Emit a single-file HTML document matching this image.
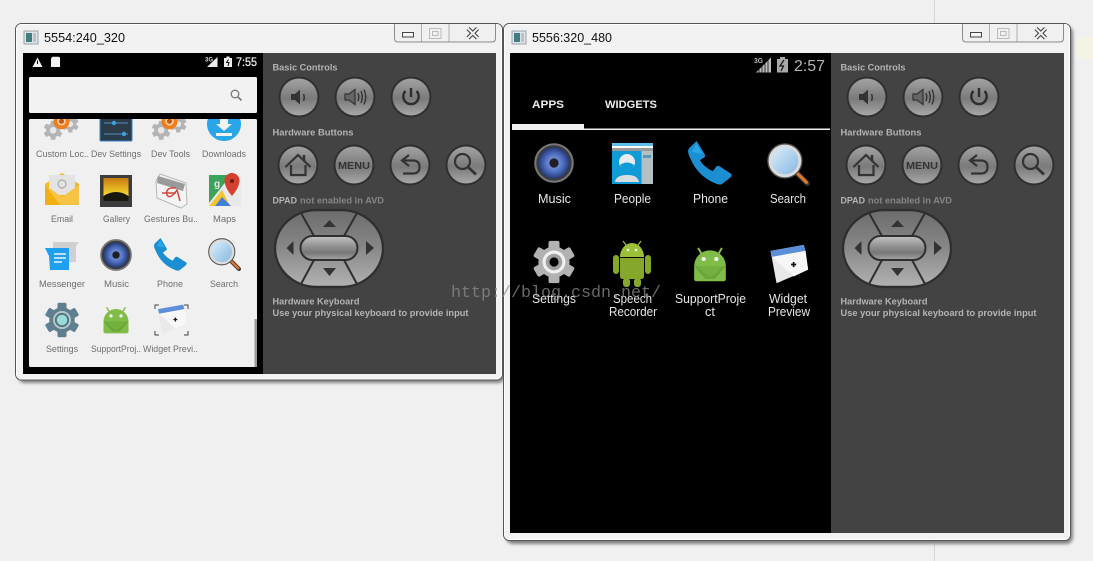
<!DOCTYPE html>
<html><head><meta charset="utf-8"><title>Emulators</title>
<style>html,body{margin:0;padding:0;background:#f0f0f0;width:1093px;height:561px;overflow:hidden}svg{display:block}text{font-family:"Liberation Sans",sans-serif}</style></head>
<body>
<svg width="1093" height="561" viewBox="0 0 1093 561" xmlns="http://www.w3.org/2000/svg">
<defs>
<filter id="sh" x="-5%" y="-5%" width="110%" height="110%"><feGaussianBlur stdDeviation="1.6"/></filter>
<linearGradient id="btn" x1="0" y1="0" x2="0" y2="1">
<stop offset="0" stop-color="#a2a2a2"/><stop offset=".2" stop-color="#949494"/><stop offset=".45" stop-color="#808080"/><stop offset=".55" stop-color="#7b7b7b"/><stop offset=".75" stop-color="#8e8e8e"/><stop offset="1" stop-color="#a8a8a8"/>
</linearGradient>
<linearGradient id="pill" x1="0" y1="0" x2="0" y2="1">
<stop offset="0" stop-color="#c4c4c4"/><stop offset=".5" stop-color="#8a8a8a"/><stop offset=".7" stop-color="#777"/><stop offset="1" stop-color="#a8a8a8"/>
</linearGradient>
<linearGradient id="dp" x1="0" y1="0" x2="0" y2="1">
<stop offset="0" stop-color="#6c6c6c"/><stop offset=".45" stop-color="#858585"/><stop offset="1" stop-color="#b2b2b2"/>
</linearGradient>
<radialGradient id="mus"><stop offset="0" stop-color="#8fa8e8"/><stop offset=".6" stop-color="#4c6cc0"/><stop offset="1" stop-color="#24386e"/></radialGradient>
<linearGradient id="lens" x1="0" y1="0" x2="1" y2="1"><stop offset="0" stop-color="#e2f1fb"/><stop offset="1" stop-color="#7fb4e0"/></linearGradient>
<linearGradient id="gold" x1="0" y1="0" x2="0" y2="1"><stop offset="0" stop-color="#c77a10"/><stop offset=".7" stop-color="#f5d22e"/><stop offset="1" stop-color="#f9e36a"/></linearGradient>

<symbol id="music" viewBox="0 0 48 48"><circle cx="24" cy="24" r="23" fill="#3c3c3c"/><circle cx="24" cy="24" r="22.500" fill="none" stroke="#777" stroke-width="2.500"/><circle cx="24" cy="24" r="19" fill="url(#mus)"/><circle cx="24" cy="24" r="8" fill="#6a84c8"/><circle cx="24" cy="24" r="5.500" fill="#1e1e26"/></symbol>
<symbol id="phone" viewBox="0 0 48 48"><path d="M9.500 0 L18.500 15 Q19 18 16 19 L13 21 Q17 28 27 33 L30 29 Q32 26 35 28 L47.500 36 Q48 38 46 40 L37 47 Q35 48 32 47 Q12 40 3 20 Q0 14 0 11 Q0 9 2 7Z" fill="#1b8fd2"/><path d="M9 3 L16 14 L4 12Z" fill="#2aa6e6"/></symbol>
<symbol id="search" viewBox="0 0 48 48"><line x1="30" y1="30" x2="45" y2="45" stroke="#333" stroke-width="6" stroke-linecap="round"/><line x1="33" y1="33" x2="44" y2="44" stroke="#e0782c" stroke-width="3.500" stroke-linecap="round"/><circle cx="20" cy="20" r="17" fill="url(#lens)" stroke="#dcdcdc" stroke-width="4"/><circle cx="20" cy="20" r="19" fill="none" stroke="#555" stroke-width="1.500"/></symbol>
<symbol id="android" viewBox="0 0 48 48"><path d="M13 12 L9 5 M35 12 L39 5" stroke="#8cc152" stroke-width="2.400"/><path d="M4 28 A20 20 0 0 1 44 28 V44 Q44 47 41 47 H7 Q4 47 4 44Z" fill="#7fbd48"/><path d="M4 28 H44 L30 44 H18Z" fill="#6aa53b"/><path d="M7 28 H41 L28 40 Q24 42 20 40Z" fill="#74b040"/><circle cx="16" cy="19" r="2.600" fill="#f2f2f2"/><circle cx="32" cy="19" r="2.600" fill="#f2f2f2"/></symbol>
<symbol id="widget" viewBox="0 0 48 48"><path d="M3 8 L42 1 L47 30 L10 46Z" fill="#e9e9e9"/><path d="M3 8 L42 1 L44 8 L5 15Z" fill="#5b8fd8"/><path d="M5 15 L44 8 L47 30 L30 38Z" fill="#f7f7f7"/><path d="M27 24h6M30 21v6" stroke="#111" stroke-width="2"/></symbol>
<symbol id="gearL" viewBox="0 0 48 48"><g fill="#5f7f8e"><circle cx="24" cy="24" r="17"/><rect x="18" y="1" width="12" height="46" rx="2"/><rect x="18" y="1" width="12" height="46" rx="2" transform="rotate(60 24 24)"/><rect x="18" y="1" width="12" height="46" rx="2" transform="rotate(120 24 24)"/></g><circle cx="24" cy="24" r="12" fill="#b7c7ce"/><circle cx="24" cy="24" r="9.500" fill="#55727f"/><circle cx="24" cy="24" r="7" fill="#98dcd8"/></symbol>
<symbol id="gearR" viewBox="0 0 48 48"><g fill="#b2b2b2"><circle cx="24" cy="24" r="17"/><rect x="18" y="1" width="12" height="46" rx="2"/><rect x="18" y="1" width="12" height="46" rx="2" transform="rotate(60 24 24)"/><rect x="18" y="1" width="12" height="46" rx="2" transform="rotate(120 24 24)"/></g><circle cx="24" cy="24" r="12.500" fill="#f0f0f0"/><circle cx="24" cy="24" r="9" fill="#a0a0a0"/><circle cx="24" cy="24" r="5" fill="#000"/></symbol>
<symbol id="gearG" viewBox="0 0 48 48"><g fill="#b4b4b4"><circle cx="24" cy="24" r="17"/><rect x="18" y="1" width="12" height="46" rx="2"/><rect x="18" y="1" width="12" height="46" rx="2" transform="rotate(60 24 24)"/><rect x="18" y="1" width="12" height="46" rx="2" transform="rotate(120 24 24)"/></g><circle cx="24" cy="24" r="8" fill="#e8e8e8"/></symbol>
<symbol id="gearO" viewBox="0 0 48 48"><use href="#gearG" x="-1" y="13" width="27" height="27"/><use href="#gearG" x="24" y="6" width="24" height="24"/><circle cx="24" cy="14" r="11" fill="#ef7d1a"/><circle cx="24" cy="14" r="6" fill="#f8c9a0"/><circle cx="24" cy="14" r="3.500" fill="#c65a10"/></symbol>

<g id="caption">
<path d="M394.500 24 V38 Q394.500 42 398 42 H492 Q495.500 42 495.500 38 V24" fill="#f0f0f0" stroke="#8b8b8b"/>
<path d="M421.500 24V41.500M449 24V41.500" stroke="#b0b0b0"/>
<rect x="402.500" y="32.500" width="11" height="4.500" fill="#f4f4f4" stroke="#444"/>
<rect x="429.500" y="28.500" width="11.500" height="10" fill="none" stroke="#bbb"/><rect x="432.500" y="31.500" width="5.500" height="4" fill="none" stroke="#bbb"/>
<path d="M468 28.500 L477.500 38 M477.500 28.500 L468 38" stroke="#444" stroke-width="4.200"/><path d="M468 28.500 L477.500 38 M477.500 28.500 L468 38" stroke="#f0f0f0" stroke-width="2"/>
</g>

<g id="panel">
<g font-weight="bold" font-size="9" fill="#b4b4b4">
<text x="272.500" y="70.500" textLength="65" lengthAdjust="spacingAndGlyphs">Basic Controls</text>
<text x="272.500" y="135.500" textLength="81" lengthAdjust="spacingAndGlyphs">Hardware Buttons</text>
<text x="272.500" y="203.500" textLength="24.500" lengthAdjust="spacingAndGlyphs">DPAD</text>
<text x="300" y="203.500" textLength="84" lengthAdjust="spacingAndGlyphs" fill="#858585">not enabled in AVD</text>
<text x="272.500" y="304.500" textLength="87" lengthAdjust="spacingAndGlyphs">Hardware Keyboard</text>
<text x="272.500" y="316" textLength="196" lengthAdjust="spacingAndGlyphs">Use your physical keyboard to provide input</text>
</g>
<g fill="#2f2f2f"><circle cx="299" cy="97" r="20.500"/><circle cx="355" cy="97" r="20.500"/><circle cx="411" cy="97" r="20.500"/><circle cx="298" cy="165" r="20.500"/><circle cx="354" cy="165" r="20.500"/><circle cx="410" cy="165" r="20.500"/><circle cx="466" cy="165" r="20.500"/></g>
<g fill="url(#btn)"><circle cx="299" cy="97" r="18.500"/><circle cx="355" cy="97" r="18.500"/><circle cx="411" cy="97" r="18.500"/><circle cx="298" cy="165" r="18.500"/><circle cx="354" cy="165" r="18.500"/><circle cx="410" cy="165" r="18.500"/><circle cx="466" cy="165" r="18.500"/></g>
<g fill="#333" stroke="none">
<path d="M291 94h4l5-4.500v15l-5-4.500h-4z"/><path d="M303.500 94q1.500 3.500 0 7" fill="none" stroke="#333" stroke-width="1.500"/>
<path d="M345 94h4l6-4.500v15l-6-4.500h-4z" fill="#666" stroke="#333" stroke-width="1.200"/><path d="M358 93q1.500 4 0 8M361 91q2.500 6 0 12M364 89.500q3.500 7.500 0 15" fill="none" stroke="#333" stroke-width="1.400"/>
<path d="M411 88v9" fill="none" stroke="#2d2d2d" stroke-width="2.400"/><path d="M405.500 91a7.700 7.700 0 1 0 11 0" fill="none" stroke="#2d2d2d" stroke-width="2.400"/>
<path d="M285.500 167 L298 155 L310.500 167 M291 165V175H305.500V165" fill="none" stroke="#333" stroke-width="2.200"/><path d="M304 155v6" stroke="#333" stroke-width="2.500"/>
<text x="354" y="169" text-anchor="middle" font-weight="bold" font-size="10.500" fill="#333" textLength="32" lengthAdjust="spacingAndGlyphs">MENU</text>
<path d="M409 155 L402 160.500 L409 166 M403 160.500H413Q419.500 160.500 419.500 167T413 173.500H403" fill="none" stroke="#333" stroke-width="2.200"/>
<circle cx="462.500" cy="161.500" r="7.500" fill="none" stroke="#333" stroke-width="2.200"/><path d="M468 167 L476 174.500" stroke="#333" stroke-width="2.800"/>
</g>
<rect x="275" y="210" width="108" height="77" rx="42" ry="38.500" fill="url(#dp)" stroke="#2f2f2f" stroke-width="2.400"/>
<path d="M301 213 L314 236 M357 213 L344 236 M301 284 L314 260 M357 284 L344 260" stroke="#2f2f2f" stroke-width="2"/>
<rect x="300.500" y="236" width="57" height="24" rx="12" fill="url(#pill)" stroke="#2f2f2f" stroke-width="2"/>
<path d="M323 227h13l-6.500-7z M323 268h13l-6.500 8z M293.500 241v14l-7-7z M366 241v14l8-7z" fill="#333"/>
</g>
</defs>

<rect width="1093" height="561" fill="#f0f0f0"/>
<path d="M934.500 0V24M934.500 541V561" stroke="#d6d6d6"/>
<rect x="1075" y="37" width="18" height="22" fill="#f5f3e6"/>

<!-- left window -->
<rect x="18" y="26" width="487" height="357" rx="7" fill="#808080" filter="url(#sh)"/>
<rect x="15.500" y="23.500" width="487" height="356.500" rx="6" fill="#f2f2f2" stroke="#555"/>
<rect x="16.500" y="24.500" width="485" height="354.500" rx="5" fill="none" stroke="#fff"/>
<rect x="23" y="53" width="473" height="321" fill="#434343"/>
<rect x="23" y="53" width="240" height="321" fill="#000"/>
<use href="#caption"/>
<rect x="24" y="31" width="14" height="13" fill="#dfe4e8" stroke="#9aa3ac"/><rect x="26" y="33" width="6" height="9" fill="#3f7d80"/><rect x="33" y="33" width="3" height="9" fill="#b8c2c8"/>
<text x="44" y="42" font-size="13" fill="#111" textLength="81" lengthAdjust="spacingAndGlyphs">5554:240_320</text>

<!-- left status bar -->
<path d="M37.500 57.500 L42.500 67 H32.500Z" fill="#f2f2f2"/><rect x="37" y="60.500" width="1" height="3.500" fill="#000"/>
<path d="M52.500 56.700h6.500l1 1v9.300h-9v-8.500z" fill="#f2f2f2"/>
<text x="205" y="61.500" font-size="6" font-weight="bold" fill="#ddd">3G</text>
<path d="M207 67 L217.500 57 V67Z" fill="#eee"/>
<rect x="224" y="58" width="8" height="9" fill="#eee"/><rect x="226.500" y="56.500" width="3" height="2" fill="#eee"/><path d="M228.500 59.500l-2 3h2.500l-1 3.500" stroke="#111" fill="none"/>
<text x="236" y="66" font-size="11.500" fill="#ececec" stroke="#ececec" stroke-width=".25" textLength="21" lengthAdjust="spacingAndGlyphs">7:55</text>

<rect x="29" y="77" width="228" height="36" rx="1.500" fill="#f2f2f2"/>
<circle cx="235" cy="94" r="3.800" fill="none" stroke="#777" stroke-width="1.300"/><path d="M238 97 L241.500 100.500" stroke="#777" stroke-width="1.600"/>

<rect x="29" y="119" width="228" height="248" rx="1.500" fill="#f0f0f0"/>
<rect x="254.500" y="319" width="2.500" height="48" fill="#9a9a9a"/>
<clipPath id="cardclip"><rect x="29" y="119" width="228" height="248"/></clipPath>
<g clip-path="url(#cardclip)">
<use href="#gearO" x="44" y="111" width="35" height="35"/>
<rect x="100" y="108" width="32" height="33" rx="1" fill="#2a3b4a" stroke="#3a82c8"/>
<path d="M104 123H128M104 134H128" stroke="#4a7ba8" stroke-width="1.200"/><circle cx="114" cy="123" r="2.200" fill="#3fa0e0"/><circle cx="124" cy="134" r="2.200" fill="#3fa0e0"/>
<use href="#gearO" x="152" y="111" width="35" height="35"/>
<circle cx="224" cy="124" r="17" fill="#29a6e8"/><path d="M220 119 H228 V124 H232 L224 131 L216 124 H220Z M216 133 H232 V136 H216Z" fill="#f2f2f2"/>
</g>

<!-- email -->
<path d="M62 173 L79 184 V205 H45 V184Z" fill="#f4b921"/><rect x="49" y="175" width="26" height="20" rx="1" fill="#e3e3e3"/><circle cx="62" cy="184" r="4" fill="none" stroke="#aaa" stroke-width="1.200"/>
<path d="M45 185 L62 197 L79 185 V205 H45Z" fill="#f7c344"/><path d="M45 185 L60 205 H45Z" fill="#f2b010"/>
<!-- gallery -->
<rect x="100" y="175" width="32" height="32" fill="#3c3c3c"/><rect x="103.500" y="178" width="25" height="23" fill="url(#gold)"/><path d="M103.500 201 V196 Q116 188 128.500 196 V201Z" fill="#181810"/>
<!-- gestures -->
<path d="M156 181 L160 174 L186 183 L187 204 L181 208 L157 198Z" fill="#f4f4f4" stroke="#b8b8b8"/><path d="M158 176 L185 184 L183 191 L157 183Z" fill="#9a9a9a"/><path d="M162 193 H176 M176 188 Q165 187 167 195 Q170 200 177 190 L180 201" fill="none" stroke="#d9443c" stroke-width="1.500"/>
<!-- maps -->
<rect x="209" y="175" width="32" height="31" rx="1" fill="#e9e9e9"/><path d="M209 175 H231 L209 203Z" fill="#3ba45a"/><path d="M209 206 L222 190 L230 206Z" fill="#f4c430"/><path d="M215 206 L222 197 L231 206Z" fill="#3f7fd8"/>
<path d="M232 173 a7.500 7.500 0 0 1 7.500 8 Q239 188 232 196 Q225 188 224.500 181 a7.500 7.500 0 0 1 7.500 -8Z" fill="#d2412f"/><circle cx="232" cy="181" r="2" fill="#6f1a10"/>
<text x="214" y="187" font-size="10" fill="#e8e8e8" font-weight="bold">g</text>
<!-- messenger -->
<path d="M53 242 H79 L76 246 V262 H53Z" fill="#d0d0d0"/><path d="M45 248 H69 V270 H50 L49 256Z" fill="#1da0ee"/><path d="M54 254H66M54 258H66M54 262H62" stroke="#f2f2f2" stroke-width="1.600"/>

<use href="#music" x="100" y="239" width="32" height="32"/>
<use href="#phone" x="154" y="238" width="33" height="33"/>
<use href="#search" x="208" y="238" width="33" height="33"/>
<use href="#gearL" x="44" y="302" width="36" height="36"/>
<use href="#android" x="101" y="303" width="30" height="32"/>
<use href="#widget" x="155" y="304" width="33" height="31"/>
<path d="M155 309V305H159M184 305H188V309M155 331V335H159M184 335H188V331" fill="none" stroke="#444" stroke-width="1"/>

<g font-size="9.500" fill="#6e6e6e">
<text x="36" y="157" textLength="53" lengthAdjust="spacingAndGlyphs">Custom Loc..</text>
<text x="91" y="157" textLength="50" lengthAdjust="spacingAndGlyphs">Dev Settings</text>
<text x="151" y="157" textLength="39" lengthAdjust="spacingAndGlyphs">Dev Tools</text>
<text x="202" y="157" textLength="44" lengthAdjust="spacingAndGlyphs">Downloads</text>
<text x="51" y="222" textLength="22" lengthAdjust="spacingAndGlyphs">Email</text>
<text x="103" y="222" textLength="27" lengthAdjust="spacingAndGlyphs">Gallery</text>
<text x="144" y="222" textLength="54" lengthAdjust="spacingAndGlyphs">Gestures Bu..</text>
<text x="213" y="222" textLength="23" lengthAdjust="spacingAndGlyphs">Maps</text>
<text x="39" y="287" textLength="46" lengthAdjust="spacingAndGlyphs">Messenger</text>
<text x="104" y="287" textLength="25" lengthAdjust="spacingAndGlyphs">Music</text>
<text x="157" y="287" textLength="26" lengthAdjust="spacingAndGlyphs">Phone</text>
<text x="210" y="287" textLength="28" lengthAdjust="spacingAndGlyphs">Search</text>
<text x="46" y="352" textLength="32" lengthAdjust="spacingAndGlyphs">Settings</text>
<text x="91" y="352" textLength="50" lengthAdjust="spacingAndGlyphs">SupportProj..</text>
<text x="143" y="352" textLength="55" lengthAdjust="spacingAndGlyphs">Widget Previ..</text>
</g>

<use href="#panel"/>

<!-- right window -->
<rect x="506" y="26" width="567" height="518" rx="7" fill="#808080" filter="url(#sh)"/>
<rect x="503.500" y="23.500" width="567" height="517" rx="6" fill="#f2f2f2" stroke="#555"/>
<rect x="504.500" y="24.500" width="565" height="515" rx="5" fill="none" stroke="#fff"/>
<rect x="510" y="53" width="554" height="480" fill="#434343"/>
<rect x="510" y="53" width="321" height="480" fill="#000"/>
<g transform="translate(568 0)"><use href="#caption"/></g>
<rect x="512" y="31" width="14" height="13" fill="#dfe4e8" stroke="#9aa3ac"/><rect x="514" y="33" width="6" height="9" fill="#3f7d80"/><rect x="521" y="33" width="3" height="9" fill="#b8c2c8"/>
<text x="532" y="42" font-size="13" fill="#111" textLength="80" lengthAdjust="spacingAndGlyphs">5556:320_480</text>

<text x="754" y="63" font-size="7" font-weight="bold" fill="#bbb" textLength="9" lengthAdjust="spacingAndGlyphs">3G</text>
<path d="M756 72.500H771V57.500Z" fill="#bdbdbd"/><path d="M759 72.500V69M762 72.500V66M765 72.500V63M768 72.500V60" stroke="#111" stroke-width=".8"/>
<rect x="777" y="59" width="11" height="13.500" fill="#a8a8a8"/><rect x="780" y="57" width="5" height="2" fill="#a8a8a8"/><path d="M784 60 L780 66 H783.500 L781 71" stroke="#111" fill="none" stroke-width="1.200"/>
<text x="794" y="71" font-size="16" fill="#b4b4b4" textLength="31" lengthAdjust="spacingAndGlyphs">2:57</text>

<text x="532" y="108" font-size="11" font-weight="bold" fill="#ececec" textLength="32" lengthAdjust="spacingAndGlyphs">APPS</text>
<text x="605" y="108" font-size="11" font-weight="bold" fill="#ececec" textLength="52" lengthAdjust="spacingAndGlyphs">WIDGETS</text>
<rect x="512" y="124" width="72" height="6" fill="#f0f0f0"/>
<rect x="584" y="128.500" width="246" height="1.500" fill="#f0f0f0"/>

<use href="#music" x="534" y="143" width="40" height="40"/>
<!-- people -->
<rect x="612" y="143" width="41" height="41" fill="#0f9ad8"/><rect x="612" y="143" width="41" height="3" fill="#5cc0ea"/><rect x="612" y="146" width="41" height="2" fill="#fff"/><rect x="612" y="148" width="41" height="3" fill="#999"/><rect x="641.500" y="151" width="11.500" height="33" fill="#b4c0c4"/><rect x="643" y="155" width="8" height="3" fill="#5a9ab8"/>
<circle cx="627" cy="162" r="8" fill="#e8ecee"/><path d="M620 165 Q627 160 634 165 Q633 170 627 170 Q621 170 620 165Z" fill="#0f9ad8"/><path d="M615 182 Q616 175 627 175 Q638 175 639 182Z" fill="#d8dee0"/>
<use href="#phone" x="688" y="141" width="44" height="44"/>
<use href="#search" x="767" y="143" width="43" height="43"/>
<use href="#gearR" x="532" y="240" width="44" height="44"/>

<!-- speech android -->
<g fill="#86a82a">
<rect x="613" y="255" width="6" height="19" rx="3"/><rect x="645" y="255" width="6" height="19" rx="3"/>
<path d="M620 257 A12 14 0 0 1 644 257Z" fill="#9cbf38"/>
<path d="M620 258 H644 V276 Q644 279 641 279 H623 Q620 279 620 276Z"/>
<rect x="623" y="278" width="7" height="9" rx="3"/><rect x="634" y="278" width="7" height="9" rx="3"/>
</g>
<path d="M626 245 L623 241 M638 245 L641 241" stroke="#9cbf38" stroke-width="1.200"/>
<circle cx="628" cy="250" r="1.300" fill="#eef2d8"/><circle cx="636" cy="250" r="1.300" fill="#eef2d8"/>

<use href="#android" x="691" y="243" width="38" height="40"/>
<use href="#widget" x="767" y="244" width="43" height="41"/>

<g font-size="12.500" fill="#e6e6e6">
<text x="538" y="203" textLength="33" lengthAdjust="spacingAndGlyphs">Music</text>
<text x="614" y="203" textLength="37" lengthAdjust="spacingAndGlyphs">People</text>
<text x="693" y="203" textLength="35" lengthAdjust="spacingAndGlyphs">Phone</text>
<text x="770" y="203" textLength="36" lengthAdjust="spacingAndGlyphs">Search</text>
<text x="532" y="303" textLength="44" lengthAdjust="spacingAndGlyphs">Settings</text>
<text x="613" y="303" textLength="39" lengthAdjust="spacingAndGlyphs">Speech</text>
<text x="609" y="316" textLength="48" lengthAdjust="spacingAndGlyphs">Recorder</text>
<text x="675" y="303" textLength="71" lengthAdjust="spacingAndGlyphs">SupportProje</text>
<text x="705" y="316" textLength="10" lengthAdjust="spacingAndGlyphs">ct</text>
<text x="769" y="303" textLength="38" lengthAdjust="spacingAndGlyphs">Widget</text>
<text x="768" y="316" textLength="42" lengthAdjust="spacingAndGlyphs">Preview</text>
</g>

<g transform="translate(568 0)"><use href="#panel"/></g>

<text x="451" y="297" style='font-family:"Liberation Mono",monospace' font-size="16.700" fill="#8c8c8c" opacity=".75" textLength="210">http://blog.csdn.net/</text>
</svg>
</body></html>
